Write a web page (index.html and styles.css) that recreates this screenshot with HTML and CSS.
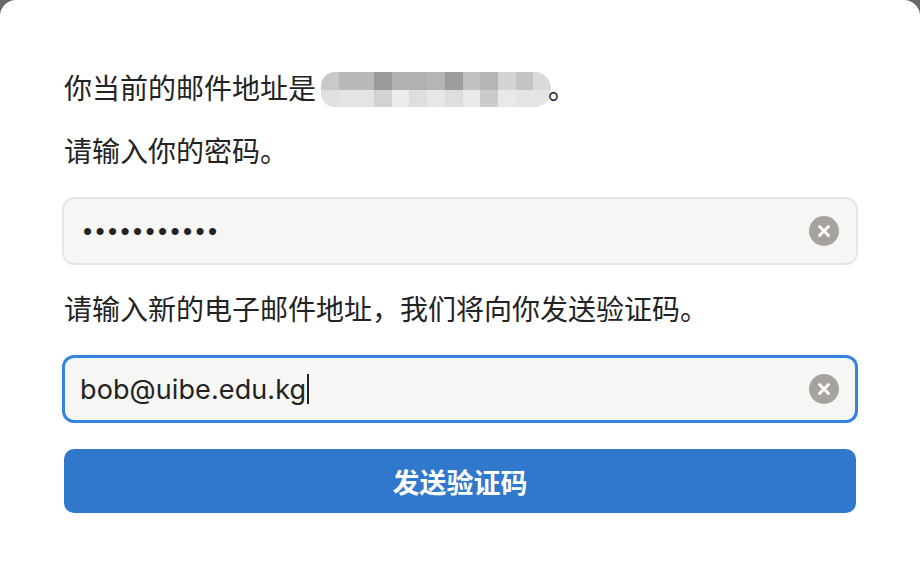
FILE: index.html
```html
<!DOCTYPE html>
<html lang="zh-CN">
<head>
<meta charset="utf-8">
<title>更改邮件地址</title>
<link rel="stylesheet" href="styles.css">
</head>
<body>
<div class="card">
  <p class="line line-first">你当前的邮件地址是<span class="mosaic" aria-label="已隐藏的邮件地址"><span class="cell c1"></span><span class="cell c2"></span><span class="cell c2"></span><span class="cell c3"></span><span class="cell c4"></span><span class="cell c4"></span><span class="cell c5"></span><span class="cell c6"></span><span class="cell c7"></span><span class="cell c5"></span><span class="cell c8"></span><span class="cell c9"></span><span class="cell c10"></span><span class="cell d1"></span><span class="cell d2"></span><span class="cell d2"></span><span class="cell d3"></span><span class="cell d4"></span><span class="cell d5"></span><span class="cell d6"></span><span class="cell d5"></span><span class="cell d7"></span><span class="cell d8"></span><span class="cell d7"></span><span class="cell d2"></span><span class="cell d2"></span></span>。</p>
  <p class="line">请输入你的密码。</p>
  <div class="field">
    <span class="value dots">•••••••••••</span>
    <span class="clear"><svg width="30" height="30" viewBox="0 0 30 30"><circle cx="15" cy="15" r="15" fill="#a7a29d"/><path d="M10.5 10.5 L19.5 19.5 M19.5 10.5 L10.5 19.5" stroke="#fff" stroke-width="3" stroke-linecap="round"/></svg></span>
  </div>
  <p class="line line-third">请输入新的电子邮件地址，我们将向你发送验证码。</p>
  <div class="field focused">
    <span class="value email">bob@uibe.edu.kg<span class="caret"></span></span>
    <span class="clear"><svg width="30" height="30" viewBox="0 0 30 30"><circle cx="15" cy="15" r="15" fill="#a7a29d"/><path d="M10.5 10.5 L19.5 19.5 M19.5 10.5 L10.5 19.5" stroke="#fff" stroke-width="3" stroke-linecap="round"/></svg></span>
  </div>
  <button class="send">发送验证码</button>
</div>
</body>
</html>
```

FILE: styles.css
```css
html, body {
  margin: 0;
  padding: 0;
  background: #676767;
  height: 100%;
  overflow: hidden;
}

.card {
  background: #ffffff;
  border-radius: 16px 16px 0 0;
  height: 100%;
  padding: 67px 64px 0 64px;
  box-sizing: border-box;
  font-family: "Noto Sans CJK SC", "Noto Sans", sans-serif;
  color: #232323;
}

.line {
  margin: 0;
  font-size: 28px;
  line-height: 40px;
  height: 40px;
  display: flex;
  align-items: center;
}

.line-first {
  margin-bottom: 23px;
}

.mosaic {
  display: grid;
  grid-template-columns: repeat(13, 17.7px);
  grid-template-rows: 18px 17px;
  width: 230px;
  height: 35px;
  margin: 5px -3px 0 5px;
  border-radius: 14px 16px 16px 14px;
  overflow: hidden;
}

.cell { display: block; }
.c1 { background: #c9c9c9; }
.c2 { background: #b9b9b9; }
.c3 { background: #9a9a9a; }
.c4 { background: #b1b1b1; }
.c5 { background: #b5b5b5; }
.c6 { background: #9d9d9d; }
.c7 { background: #c1c1c1; }
.c8 { background: #d4d4d4; }
.c9 { background: #c4c4c4; }
.c10 { background: #dadada; }
.d1 { background: #e0e0e0; }
.d2 { background: #e4e4e4; }
.d3 { background: #d3d3d3; }
.d4 { background: #ececec; }
.d5 { background: #dedede; }
.d6 { background: #e7e7e7; }
.d7 { background: #e9e9e9; }
.d8 { background: #cbcbcb; }

.field {
  margin: 27px -2px 23px -2px;
  height: 68px;
  box-sizing: border-box;
  border: 2px solid #e6e6e6;
  border-radius: 12px;
  background: #f6f6f4;
  display: flex;
  align-items: center;
  justify-content: space-between;
  padding: 0 17px 0 19px;
}

.field.focused {
  margin-bottom: 26px;
  border: 3px solid #3584e1;
  padding: 0 16px 0 15px;
}

.value {
  font-family: "Inter", "Liberation Sans", sans-serif;
  color: #232323;
  display: flex;
  align-items: center;
}

.dots {
  font-family: "Liberation Sans", sans-serif;
  font-size: 26px;
  letter-spacing: 3.4px;
}

.email {
  font-size: 27px;
  letter-spacing: 0.1px;
}

.caret {
  display: inline-block;
  width: 2px;
  height: 30px;
  background: #222;
  margin-left: 1px;
}

.clear {
  display: flex;
  width: 30px;
  height: 30px;
}

.send {
  display: block;
  width: 100%;
  height: 64px;
  border: none;
  border-radius: 10px;
  background: #2f78cc;
  color: #ffffff;
  font-family: "Noto Sans CJK SC", "Noto Sans", sans-serif;
  font-size: 27px;
  font-weight: 700;
  padding: 0;
}
```
